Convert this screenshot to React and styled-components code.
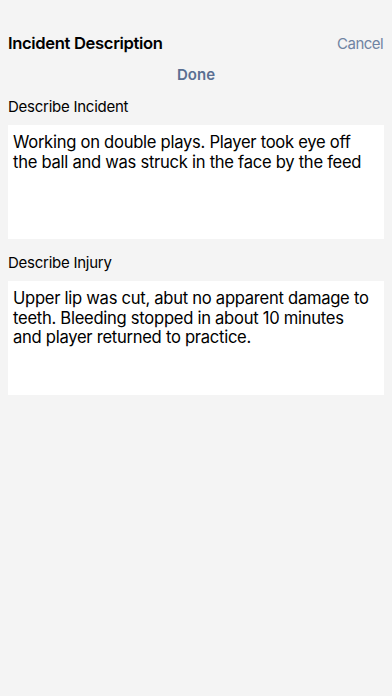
import React from "react";
import styled, { createGlobalStyle } from "styled-components";

const Global = createGlobalStyle`
  html, body { margin: 0; padding: 0; background: #f4f4f4; }
  body { font-family: Inter, "Liberation Sans", Arial, sans-serif; color: #000; }
`;

const Page = styled.div`
  width: 392px;
  min-height: 696px;
  background: #f4f4f4;
  display: flex;
  flex-direction: column;
`;

const Header = styled.div`
  height: 94px;
  padding: 31px 9px 0 8px;
  box-sizing: border-box;
  display: grid;
  grid-template-columns: 1fr auto;
  grid-template-rows: 24px 39px;
  align-items: center;
`;

const Title = styled.div`
  font-size: 16.6px;
  font-weight: 600;
  letter-spacing: -0.35px;
`;

const Cancel = styled.div`
  font-size: 15px;
  color: #6f83a2;
  letter-spacing: -0.55px;
`;

const Done = styled.div`
  grid-column: 1 / span 2;
  justify-self: center;
  font-size: 15px;
  font-weight: 600;
  color: #5a6f92;
  padding-left: 1px;
`;

const Label = styled.div`
  font-size: 15px;
  padding: 0 8px;
  height: 26px;
  line-height: 26px;
  margin-bottom: 5px;
  letter-spacing: -0.25px;
`;

const Box = styled.div`
  margin: 0 8px ${(p) => p.$gap}px;
  height: 114px;
  background: #fff;
  box-sizing: border-box;
  padding: 8px 12px 8px 5px;
  font-size: 16.6px;
  line-height: 19.7px;
  letter-spacing: -0.28px;
`;

export default function App() {
  return (
    <Page>
      <Global />
      <Header>
        <Title>Incident Description</Title>
        <Cancel>Cancel</Cancel>
        <Done>Done</Done>
      </Header>
      <Label>Describe Incident</Label>
      <Box $gap={11}>
        Working on double plays. Player took eye off the ball and was struck in the face by the feed
      </Box>
      <Label>Describe Injury</Label>
      <Box $gap={0}>
        Upper lip was cut, abut no apparent damage to teeth. Bleeding stopped in about 10 minutes and player returned to practice.
      </Box>
    </Page>
  );
}
